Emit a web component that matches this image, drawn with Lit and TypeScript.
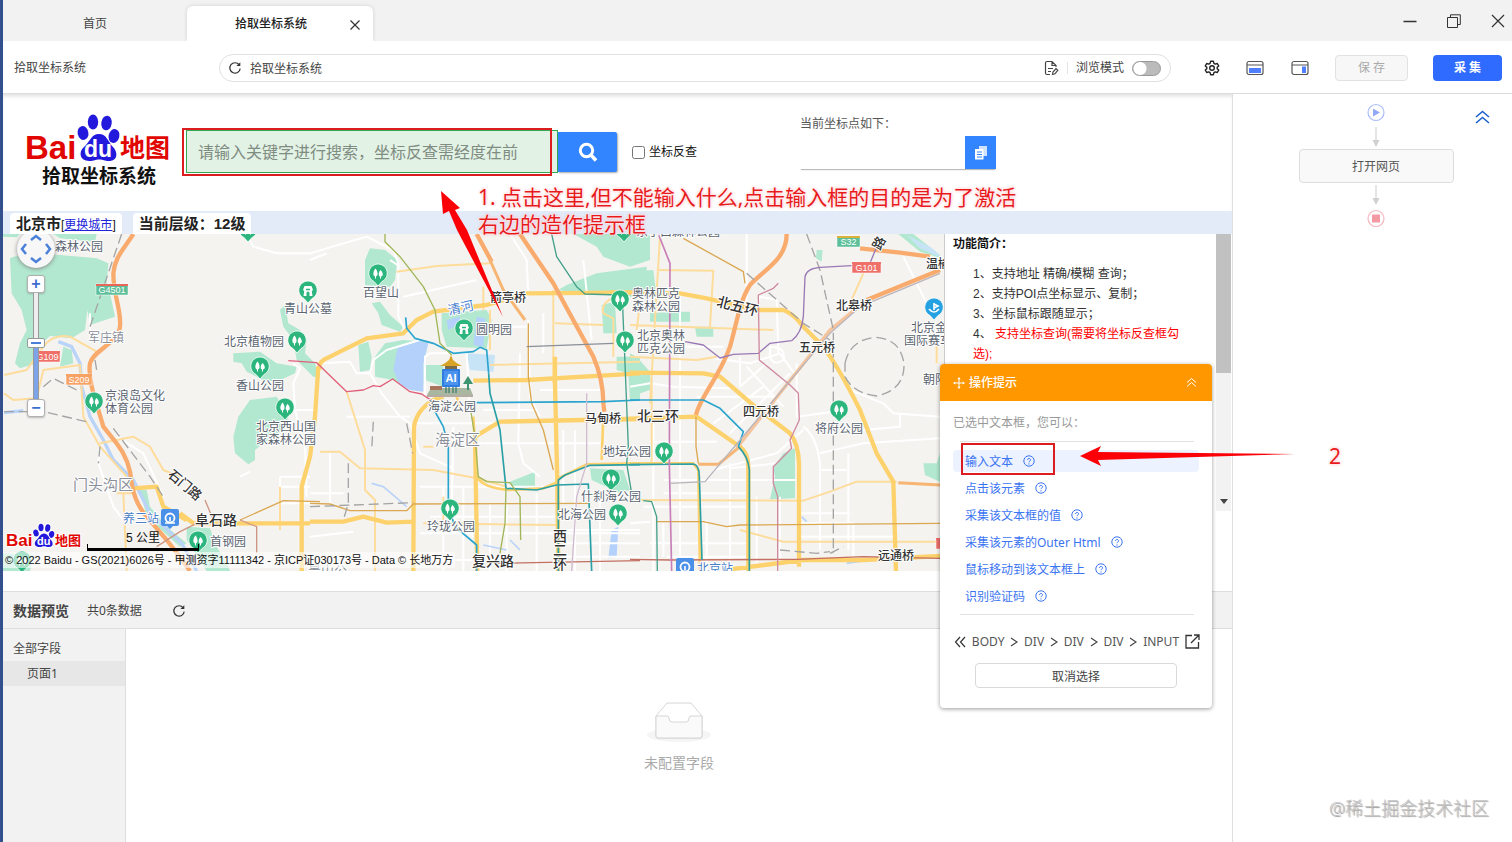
import { LitElement, html, svg, css } from "lit";
import { customElement } from "lit/decorators.js";

type Line = { c: string; w: number; dash?: string; a?: string; b?: string; m?: string };

// Map geometry is kept in thirds of a pixel, in three neighbouring tiles: a (west), b (centre), m (east).
const AREAS: Line[] = [
  {
    c: "#b1e8cf",
    w: 0,
    a: "M30 85 Q60 70 180 75 L290 85 L325 100 L320 160 L330 190 L345 260 L270 285 L262 240 L255 300 L215 325 L150 318 L120 345 L110 400 L60 415 L45 400 L60 340 L80 300 L65 240 L35 190Z M9 12 H60 L50 22 L9 20Z M160 12 H290 L285 35 L180 25Z M190 350 L215 360 L220 400 L180 410Z M840 240 L855 225 L865 280 L900 300 L920 330 L915 370 L945 400 L960 445 L940 440 L890 390 L880 330 L850 290Z M700 370 L780 365 L830 400 L890 410 L885 430 L830 455 L790 450 L740 425 L725 400 L700 395Z M750 510 L830 500 L865 560 L850 600 L790 640 L765 660 L765 690 L745 703 L705 670 L700 620 L715 560Z M9 970 L100 975 L90 1023 H9Z M560 890 L630 895 L650 950 L680 1000 L690 1023 H620 L560 930Z M350 700 L390 750 L400 790 L380 740Z M420 780 L440 780 L450 830 L500 890 L560 940 L540 950 L440 860Z",
    b: "M165 90 L180 55 L225 60 L262 90 L255 150 L240 170 L165 165Z M185 220 L210 215 L240 255 L280 290 L270 305 L215 285 L205 250Z M145 345 L175 335 L185 380 L180 420 L150 425Z M195 380 L225 340 L280 330 L355 335 L340 400 V460 L310 480 L250 450 L195 440Z M395 250 L530 240 L545 270 L530 355 L410 350 L395 300Z M345 405 H400 V470 L345 450Z M790 12 H1020 V90 L960 110 L880 80 L860 50Z M745 180 L770 165 L860 130 L1010 110 V200 L800 190Z M875 225 L915 215 L920 310 L880 310Z M920 380 H990 V510 H960 L955 430 L920 420Z M600 755 L675 725 V775 H610Z M840 715 L940 720 L960 780 L930 790 L845 750Z",
    m: "M0 125 L70 120 L80 200 H0Z M140 245 H180 V275 H60 V250Z M195 290 H250 V320 H200Z M0 370 L20 380 L60 425 V480 L0 500Z M560 60 L578 60 L575 95 L558 85Z M805 12 H850 L930 75 L925 82 L870 65Z M495 655 V805 L420 808 L435 740 L430 715 L460 670Z M930 670 L920 700 L880 700 L885 735 L930 755Z",
  },
  {
    c: "#b3d1fb",
    w: 0,
    b: "M262 355 L320 330 L355 340 L340 400 V485 L300 480 L270 465 L250 420Z M410 270 L450 260 L450 280 L415 300Z M500 260 L525 265 L520 350 L490 345Z M905 900 L925 890 L920 980 L895 985Z",
  },
  { c: "#c6e4f6", w: 0, b: "M470 370 L555 375 L550 425 L480 420Z", m: "M830 15 L900 50 L930 75 L920 78 L870 55Z" },
];

const ROADS: Line[] = [
  {
    c: "#ffffff",
    w: 6,
    a: "M12 545 L60 540 M740 12 L760 50 L830 70 H930 M270 250 V300 M880 400 L900 415 L880 460 L885 540 L915 650 L920 800 M885 540 H945 M840 740 H930 M840 740 V880 M840 770 H930 M840 820 H930 M300 650 L295 700 L340 830 L370 870 M350 620 L430 670 L490 800 M720 740 L750 725",
    b: "M0 70 L100 40 L170 20 L250 60 L265 100 V260 L290 310 M35 400 L120 395 L140 430 H180 L190 390 L230 360 L330 330 M180 430 L215 490 L270 560 L300 580 L330 670 L430 715 M320 580 H560 M360 370 L345 380 V500 M360 370 H470 L480 560 M430 590 L425 860 L490 920 M330 770 H740 M360 860 H740 M400 770 V1023 M460 770 V1023 M540 820 V1023 M590 820 V1023 M680 790 V1023 M330 910 H990 M60 670 V830 M0 920 L130 905 M630 370 L625 640 L640 700 L690 740 M655 270 L660 500 L690 560 M500 640 H870 M690 480 H870 M760 600 V820 M795 600 V1023 M520 540 H680 M600 12 L650 90 L655 200 M540 290 H650 M820 90 L845 330 M700 250 V370 M280 200 L500 150 M50 70 L0 90 M870 660 H990 M760 900 H990 M760 940 H990 M760 980 H990 M870 800 V1023 M270 110 L240 90 M700 860 H870 M0 790 H100 M110 560 H300 M240 990 H500",
    m: "M0 470 L60 460 L130 470 L300 475 M150 190 V1023 M100 350 H280 M350 12 V230 M380 240 L390 200 L440 210 L445 370 M250 385 L360 400 L450 370 L500 440 M330 470 L410 400 M350 410 L460 530 M250 580 L400 470 M300 610 L480 430 M60 635 H260 M70 570 V1023 M100 750 H500 M100 790 H360 M40 830 H360 M60 940 H350 M110 980 H350 M300 700 V1023 M230 870 V1023 M250 720 L440 670 L520 600 M300 715 L440 700 M500 560 L610 545 M520 590 Q560 620 570 700 V960 M655 670 V960 M570 720 H650 M660 480 L760 520 L790 550 L930 560 M570 670 L700 640 L930 625 M700 600 L810 590 V550 M820 80 L890 220 M0 880 L60 875 M380 800 V1000 M450 800 V1000 M500 880 H670 V980 M510 850 H660 M510 920 H800 M200 500 H440 M100 880 V980 M420 350 Q470 350 460 390 Q430 410 420 380Z M330 380 V470 M500 400 V560",
  },
  {
    c: "#b9d3f9",
    w: 10,
    a: "M175 335 L215 350 L240 400 L245 470 L270 560 L310 630 L340 690 L400 750 L450 850 L545 940 L590 1023 M12 548 L70 542",
  },
  { c: "#b9d3f9", w: 5, b: "M185 760 L220 770 L290 830 M520 945 L590 960 M600 930 L630 960", m: "M515 860 L530 875 M650 1000 L720 990" },
  {
    c: "#fddc9c",
    w: 6,
    a: "M12 435 L80 420 L130 350 Q160 310 210 320 L290 365 M12 490 L40 510 L110 505 L130 420 L240 405 L250 560 L300 650 L380 740 M300 640 L400 620 L450 650 L490 720 L540 740 M370 790 L380 1023 M350 790 H400 M840 770 V900",
    b: "M30 665 H90 L150 715 L370 720 L500 745 L590 770 M110 485 L165 660 V780 L195 810 V1023 M260 125 L380 108 L540 100 M540 405 L990 395 M735 280 L880 285 M730 180 V460 M520 170 V240 M915 200 Q870 220 880 250 L910 265 V380 M340 650 H370 M540 240 V360 M340 880 L740 885 M400 800 V870",
    m: "M80 120 L250 122 L240 290 M20 300 L30 220 M0 285 L430 300 M90 20 L60 520 M65 440 V700 M0 810 L520 812 L600 785 L680 755 L800 755 M330 900 L460 935 H930 M0 380 L200 390 L260 380 M700 130 L660 220 M920 340 V400",
  },
  {
    c: "#fdd16b",
    w: 13,
    a: "M955 410 L945 560 L930 680 L905 770 V1023 M540 850 L580 880 H930 M400 775 L470 770 L490 830 L560 870",
    b: "M28 420 Q25 395 50 385 L90 365 L170 325 L280 310 L320 270 L370 245 L530 225 L650 190 L1020 187 M310 1023 L312 590 Q320 540 370 510 L400 500 M0 875 H100 L160 860 L230 878 L310 875 M735 380 V460 L742 760 L745 1023 M502 1023 L495 620 L570 575 L820 570 L990 567 M490 452 L650 450 L990 430",
    m: "M-60 187 L150 190 L230 205 L380 240 H460 Q490 250 520 290 L575 345 Q620 400 690 540 L740 670 L790 755 L798 1023 M-60 568 L200 560 L330 650 Q355 670 355 710 V1023 M0 428 L220 430 L270 440 L375 530 L480 610 Q505 640 507 700 V1010 M300 1018 L520 990 H700 L930 978",
  },
  {
    c: "#fdd16b",
    w: 8,
    b: "M880 560 L875 690 M745 745 L830 703 L990 700 M490 560 L500 740 Q520 775 600 780 L700 775 L745 755 M440 500 L450 530",
    m: "M0 700 H190 L205 720 L210 1023",
  },
  {
    c: "#f9ab6e",
    w: 13,
    a: "M400 12 C370 60 345 80 340 130 C340 200 365 240 360 290 C355 340 280 360 270 400 C262 450 290 520 310 590 L350 640 Q390 690 395 760 Q405 820 440 860 L500 930 Q540 980 570 1023",
    b: "M630 12 L730 160 Q800 290 850 380 Q880 450 880 520 L883 545 M500 12 L545 95",
    m: "M470 12 C470 90 400 120 360 165 C330 210 320 280 300 350 C270 440 210 500 198 555 M690 55 L810 68 L900 80 M930 120 L710 210",
  },
  { c: "#f7b574", w: 9, b: "M540 90 L580 180 L645 270", m: "M805 758 L930 765 M205 703 H265 L330 650" },
  { c: "#f5c39c", w: 10, m: "M710 210 L600 300 L410 540 L320 655" },
  { c: "#dba852", w: 4, a: "M720 870 L850 812 L960 815", b: "M0 820 L60 822 L120 842 H290 L310 822 L835 820 M655 280 V440 L665 520 L700 600 L730 720", m: "M80 875 H220 L290 890 L330 885 L930 880 M160 25 L340 125 L345 160 M198 560 V650 L205 700" },
  { c: "#cf9683", w: 4, a: "M615 810 L640 870 M470 950 L540 905 L590 880 M720 870 L770 890 V970" },
  { c: "#c46f62", w: 4, b: "M560 1000 L990 992", m: "M0 988 L120 990 L500 988 L700 980 L930 985" },
];

const RAILS: Line[] = [
  {
    c: "#a4a4a4",
    w: 4,
    dash: "30 14",
    a: "M365 12 L270 290 M285 390 L290 420 M12 545 H130 L260 575 M130 470 L160 445 L230 480 M340 595 L450 740 L490 800 M300 650 L295 700",
    b: "M190 575 L185 660 M115 700 V820 L100 870 M290 580 L308 670 M0 830 L310 818",
    m: "M530 12 L570 120 L610 300 V970 M350 130 L520 280 L600 330 M600 970 L640 950 M450 960 L560 970 L600 965 M645 400 Q660 330 735 322 Q810 325 822 400 Q825 480 740 498 Q670 490 645 440Z",
  },
];

const METRO: Line[] = [
  { c: "#2ba5cf", w: 5, b: "M287 262 L290 295 L315 325 L370 340 L430 370 L490 365 L510 352 L530 360 L536 430 M500 518 L880 515 L990 510 M375 545 L400 590 L415 650 V830 L435 890 L500 945 V1023", m: "M0 510 H220 L270 535 L340 605 L325 650" },
  { c: "#2b9fa6", w: 5, b: "M536 430 L540 490 L570 600 L588 775 L680 780 L740 765 L835 762 L845 1023 M745 1023 V750 L765 735 L840 706 L990 704", m: "M0 704 L190 702 Q208 705 208 740 L216 990 M325 650 Q355 680 358 720 V1023" },
  { c: "#a0b658", w: 4, b: "M225 12 V35 L270 80 L340 170 L375 240 L390 340 L425 375 M480 530 L495 620 L505 740 L530 755 L600 758 L630 800 L632 930 M588 775 L585 880 L570 970" },
  { c: "#45a08a", w: 4, b: "M725 12 L740 80 L800 170 L825 192 L930 195 M938 230 L945 400 L955 650 L950 700 L965 790", m: "M40 812 L65 815 L80 860 L82 1023" },
  { c: "#e0607a", w: 4, b: "M-65 392 L20 398 L110 485 L160 480 L190 467 L210 470 L248 447 L300 485 L335 492 L365 512" },
  { c: "#8a8f98", w: 4, b: "M650 350 L910 340" },
  { c: "#d0bcd0", w: 4, b: "M830 490 V700 L800 800 L785 1023" },
  { c: "#c87fb8", w: 5, m: "M85 12 L120 100 L118 700 L125 1023" },
  { c: "#9a78b5", w: 4, m: "M665 107 L570 112 Q530 115 525 140 L520 260 Q515 310 485 332 L420 340 L385 370 L310 373 L270 384 L220 345 L165 335 M740 50 L720 100" },
  { c: "#d08aa0", w: 4, m: "M445 160 L430 175 L385 195 L388 390 L480 465 L505 490 L508 570 L480 630 L485 655 L430 710 V760 L443 800 V1023" },
  { c: "#b9b4bc", w: 4, m: "M930 130 L690 230 L600 310 L225 755 L120 760" },
];

const TREE_PINS = [
  [378, 274], [297, 341], [260, 367], [285, 408], [94, 402], [198, 541], [620, 300], [625, 341],
  [839, 410], [664, 452], [611, 479], [618, 514], [450, 509], [22, 561], [248, 230], [624, 230],
];
const GATE_PINS = [[308, 291], [464, 329]];
const STATIONS = [[170, 518], [685, 567]];

// x, y of the baseline start, text, size, kind, rotation
const LABELS: [number, number, string, number, string, number?][] = [
  [55, 251, "森林公园", 12, "poi"],
  [88, 342, "军庄镇", 12, "area"],
  [224, 346, "北京植物园", 12, "poi"],
  [284, 313, "青山公墓", 12, "poi"],
  [363, 297, "百望山", 12, "poi"],
  [236, 390, "香山公园", 12, "poi"],
  [256, 431, "北京西山国", 12, "poi"],
  [256, 444, "家森林公园", 12, "poi"],
  [105, 400, "京浪岛文化", 12, "poi"],
  [105, 413, "体育公园", 12, "poi"],
  [73, 490, "门头沟区", 15, "area"],
  [167, 476, "石门路", 13, "road", 40],
  [123, 523, "养三站", 12, "metro"],
  [195, 525, "阜石路", 14, "road"],
  [210, 546, "首钢园", 12, "poi"],
  [449, 315, "清河", 13, "water", -12],
  [490, 302, "箭亭桥", 12, "road"],
  [476, 334, "圆明园", 12, "poi"],
  [428, 411, "海淀公园", 12, "poi"],
  [435, 445, "海淀区", 15, "area"],
  [427, 531, "玲珑公园", 12, "poi"],
  [472, 566, "复兴路", 14, "road"],
  [585, 423, "马甸桥", 12, "road"],
  [603, 456, "地坛公园", 12, "poi"],
  [581, 501, "什刹海公园", 12, "poi"],
  [558, 519, "北海公园", 12, "poi"],
  [553, 541, "西", 14, "road"],
  [553, 555, "二", 14, "road"],
  [553, 569, "环", 14, "road"],
  [636, 236, "东小口森林公园", 12, "poi"],
  [632, 298, "奥林匹克", 12, "poi"],
  [632, 311, "森林公园", 12, "poi"],
  [637, 340, "北京奥林", 12, "poi"],
  [637, 353, "匹克公园", 12, "poi"],
  [716, 306, "北五环", 14, "road", 14],
  [836, 310, "北皋桥", 12, "road"],
  [799, 352, "五元桥", 12, "road"],
  [743, 416, "四元桥", 12, "road"],
  [637, 421, "北三环", 14, "road"],
  [815, 433, "将府公园", 12, "poi"],
  [878, 560, "远通桥", 12, "road"],
  [697, 573, "北京站", 12, "metro"],
  [880, 251, "路", 13, "road", -62],
  [926, 268, "温榆桥", 12, "road"],
  [911, 332, "北京金港", 12, "poi"],
  [904, 345, "国际赛车场", 12, "poi"],
  [923, 384, "朝阳区", 12, "poi"],
  [308, 575, "景山公", 13, "area"],
];

// x, y, width, text, fill, cap colour
const SHIELDS: [number, number, number, string, string, string][] = [
  [96, 284, 32, "G4501", "#5cbf99", "#e8675b"],
  [35, 351, 25, "G109", "#ef7068", "#ef7068"],
  [66, 374, 26, "S209", "#f7a265", "#f7a265"],
  [837, 236, 23, "S32", "#5cbf99", "#d9b13c"],
  [852, 262, 29, "G101", "#ef7068", "#ef7068"],
  [936, 538, 20, "", "#ef7068", "#ef7068"],
];

const paw = svg`
  <ellipse cx="12" cy="28" rx="5.4" ry="7" fill="#2319dc" transform="rotate(-12 12 28)"></ellipse>
  <ellipse cx="22" cy="17" rx="5.2" ry="7.4" fill="#2319dc"></ellipse>
  <ellipse cx="35.500" cy="18" rx="5.2" ry="7.400" fill="#2319dc" transform="rotate(8 35.5 18)"></ellipse>
  <ellipse cx="43" cy="31" rx="5.4" ry="7" fill="#2319dc" transform="rotate(14 43 31)"></ellipse>
  <path d="M28 29C20 29 19 37 13 42C7 47 9 56 18 56C24 56 24 54.500 28 54.500C33 54.500 33 56 38 56C47 56 47 47 42 42C37 37 36 29 28 29Z" fill="#2319dc"></path>`;

const helpIcon = html`<svg class="help" viewBox="0 0 12 12" width="12" height="12" aria-hidden="true">
  <circle cx="6" cy="6" r="5.2" fill="none" stroke="currentColor"></circle>
  <path d="M4.400 5C4.400 3 7.600 3 7.600 4.900C7.600 6 6 6 6 7.200" fill="none" stroke="currentColor"></path>
  <circle cx="6" cy="8.900" r=".6" fill="currentColor"></circle>
</svg>`;

const reloadIcon = html`<svg viewBox="0 0 14 14" width="14" height="14" aria-hidden="true">
  <path d="M11.200 3.800A5.200 5.200 0 1 0 12.200 7.600" fill="none" stroke="#333" stroke-width="1.200"></path>
  <path d="M12.300 1.200V5H8.400Z" fill="#333"></path>
</svg>`;

@customElement("city-map")
export class CityMap extends LitElement {
  static styles = css`
    :host {
      display: block;
      position: relative;
      overflow: hidden;
      height: 337px;
      background: #f4f3f0;
      font-family: "Liberation Sans", "Noto Sans CJK SC", sans-serif;
    }
    .canvas {
      display: block;
      width: 100%;
      height: 100%;
    }
    .label {
      paint-order: stroke;
      stroke: #fff;
      stroke-width: 2px;
      stroke-linejoin: round;
      fill: #555;
    }
    .road { fill: #333; font-weight: 500; }
    .poi { fill: #5b6470; }
    .area { fill: #8a8f9a; }
    .metro { fill: #4a7fc8; }
    .water { fill: #4a80d0; }
    .shield { fill: #fff; font-size: 9px; text-anchor: middle; }
    .logo-text { font-weight: 700; fill: #e10601; stroke: #fff; stroke-width: 2px; paint-order: stroke; }
    .du { fill: #fff; font-weight: 700; }
    .pan {
      position: absolute;
      top: -5px;
      left: 13px;
      width: 40px;
      height: 40px;
      filter: drop-shadow(0 1px 2px #888);
    }
    .zoom {
      position: absolute;
      top: 41px;
      left: 23px;
      display: flex;
      flex-direction: column;
      align-items: center;
      width: 20px;
    }
    .zoom button {
      width: 18px;
      height: 18px;
      padding: 0;
      border: 1px solid #b0b0b0;
      border-radius: 3px;
      background: #fff;
      color: #3a6fd0;
      font: 700 16px/14px "Liberation Sans", sans-serif;
      box-shadow: 0 1px 2px #8888;
    }
    .zoom input {
      appearance: none;
      writing-mode: vertical-lr;
      direction: rtl;
      width: 18px;
      height: 106px;
      margin: 0;
      background: linear-gradient(#eee 50%, #7da4e8 50%) center / 4px 100% no-repeat,
        linear-gradient(#999, #999) center / 6px 100% no-repeat;
    }
    .zoom input::-webkit-slider-thumb {
      appearance: none;
      box-sizing: border-box;
      width: 18px;
      height: 10px;
      border: 1px solid #999;
      border-radius: 2px;
      background: linear-gradient(#4a80d8, #4a80d8) center / 10px 2px no-repeat, #fff;
    }
    .scale {
      position: absolute;
      left: 84px;
      bottom: 20px;
      width: 112px;
      height: 24px;
      box-sizing: border-box;
      border-bottom: 3px solid #000;
      background: linear-gradient(#000, #000) left bottom / 1px 4px no-repeat,
        linear-gradient(#000, #000) right bottom / 1px 4px no-repeat;
      color: #111;
      font-size: 12px;
      line-height: 22px;
      text-align: center;
    }
    .copyright {
      position: absolute;
      left: 0;
      bottom: 3px;
      padding: 0 2px;
      color: #111;
      background: #fff9;
      font-size: 11px;
      line-height: 16px;
      white-space: nowrap;
    }
  `;

  private layer(lines: Line[]) {
    const tile = (l: Line, d: string | undefined, dx: number) =>
      d
        ? svg`<path d=${d} transform="translate(${dx} 0)" fill=${l.w ? "none" : l.c} stroke=${l.w ? l.c : "none"}
            stroke-width=${l.w} stroke-linejoin="round" stroke-dasharray=${l.dash ?? "none"}></path>`
        : svg``;
    return lines.map((l) => svg`${tile(l, l.a, 0)}${tile(l, l.b, 930)}${tile(l, l.m, 1890)}`);
  }

  private pin(x: number, y: number, glyph: unknown, fill = "#2cb57c") {
    return svg`<g transform="translate(${x} ${y})">
      <path d="M0 12L-4 7.500A9.200 9.200 0 1 1 4 7.500Z" fill=${fill} stroke="#fff" stroke-width=".8"></path>${glyph}
    </g>`;
  }

  render() {
    const trees = svg`<path d="M-2.500 -5.500C-5.500 -2 -5 2 -3 2.400V4.500H-2V2.400C0 2 .400 -2 -2.500 -5.500ZM2.500 -4C0 -1 .500 2 2 2.400V4.500H3V2.400C5.500 2 5.500 -1 2.500 -4Z" fill="#fff"></path>`;
    const gate = svg`<path d="M-5 -1L-3.500 -5H3.500L5 -1L3.800 0L4.500 5H1.500V2A1.500 1.500 0 0 0 -1.500 2V5H-4.500L-3.800 0Z" fill="#fff"></path><path d="M-2 -1.500H2" stroke="#2cb57c" stroke-width="1.500"></path>`;
    const anchor = svg`<path d="M0 -5V2M-5 1Q0 7 5 1M0 -4L4 -2L0 0" stroke="#fff" stroke-width="1.600" fill="none"></path>`;
    return html`
      <svg class="canvas" viewBox="3 234 941 337" preserveAspectRatio="xMinYMin slice" role="img" aria-label="北京市地图">
        <g transform="translate(0 230) scale(.33333)">
          ${this.layer(AREAS)}${this.layer(ROADS)}${this.layer(RAILS)}${this.layer(METRO)}
        </g>
        ${SHIELDS.map(
          ([x, y, w, t, f, cap]) => svg`<rect x=${x} y=${y} width=${w} height="11" fill=${f} stroke="#fff" stroke-width=".5"></rect>
            <rect x=${x} y=${y} width=${w} height="2" fill=${cap}></rect>
            <text class="shield" x=${x + w / 2} y=${y + 9}>${t}</text>`,
        )}
        <g transform="translate(451 378)">
          <path d="M-24 17L-20 10H19L22 17Z" fill="#a9b7a0"></path>
          <path d="M-24 17H22V19H-24Z" fill="#b5ada5"></path>
          <path d="M-21 8H-9V12H-21Z" fill="#a8745c"></path>
          <path d="M17 -2L22 6H18V12H16V6H12Z" fill="#3f9470"></path>
          <path d="M-6 -12H6V-8H-6Z" fill="#7a6a48"></path>
          <path d="M-5 9V15M-2 9V15M2 9V15M5 9V15" stroke="#39786a" stroke-width="1.200"></path>
          <path d="M0 -23L2 -18Q5 -15 11 -12H-11Q-5 -15 -2 -18Z" fill="#d8a428"></path>
          <rect x="-9" y="-9" width="18" height="18" rx="1" fill="#2f7de0"></rect>
          <rect x="-7" y="-7" width="14" height="14" fill="#4b93ee"></rect>
          <text x="0" y="4" fill="#fff" font-size="11" font-weight="700" text-anchor="middle">AI</text>
        </g>
        ${TREE_PINS.map(([x, y]) => this.pin(x, y, trees))}
        ${GATE_PINS.map(([x, y]) => this.pin(x, y, gate))}
        ${this.pin(934, 308, anchor, "#25a0e0")}
        ${STATIONS.map(
          ([x, y]) => svg`<g transform="translate(${x} ${y})">
            <path d="M-7 -9H7Q9 -9 9 -7V6Q9 8 7 8H3L0 11L-3 8H-7Q-9 8 -9 6V-7Q-9 -9 -7 -9Z" fill="#4a90e8"></path>
            <circle r="4.500" fill="none" stroke="#fff" stroke-width="1.800"></circle>
            <path d="M-5 5H5M0 -1V3" stroke="#fff" stroke-width="1.600"></path>
          </g>`,
        )}
        ${LABELS.map(
          ([x, y, t, s, k, r]) =>
            svg`<text class="label ${k}" font-size=${s} transform="translate(${x} ${y}) rotate(${r ?? 0})">${t}</text>`,
        )}
        <g transform="translate(5 520)">
          <text class="logo-text" x="1" y="26" font-size="17">Bai</text>
          <text class="logo-text" x="50" y="25" font-size="13">地图</text>
          <g transform="translate(25 -1) scale(.5)" stroke="#fff" stroke-width="4" paint-order="stroke">${paw}</g>
          <text class="du" x="32" y="25" font-size="11">du</text>
        </g>
      </svg>
      <svg class="pan" viewBox="0 0 40 40" aria-hidden="true">
        <circle cx="20" cy="20" r="19" fill="#f7f7f7"></circle>
        <path d="M15 11L20 7L25 11M15 29L20 33L25 29M10 15L6 20L10 25M30 15L34 20L30 25" fill="none" stroke="#4a80d8" stroke-width="2.500"></path>
      </svg>
      <div class="zoom">
        <button aria-label="放大">+</button>
        <input type="range" aria-label="缩放级别" min="0" max="100" value="53" />
        <button aria-label="缩小">−</button>
      </div>
      <div class="scale">5 公里</div>
      <div class="copyright">© 2022 Baidu - GS(2021)6026号 - 甲测资字11111342 - 京ICP证030173号 - Data © 长地万方</div>
    `;
  }
}

@customElement("app-root")
export class AppRoot extends LitElement {
  static styles = css`
    :host {
      display: flex;
      flex-direction: column;
      box-sizing: border-box;
      min-height: 100vh;
      border-left: 3px solid #34508c;
      position: relative;
      overflow: hidden;
      background: #fff;
      color: #444;
      font-family: "Noto Sans", "Noto Sans CJK SC", sans-serif;
      font-size: 12px;
      line-height: 20px;
    }
    * { box-sizing: border-box; }
    button, input { font-family: inherit; font-size: 12px; }
    button { padding: 0; border: 0; background: none; color: inherit; cursor: pointer; }
    svg { display: block; flex: none; }

    .tabs {
      display: flex;
      align-items: flex-end;
      height: 41px;
      background: #f2f2f2;
    }
    .tab {
      display: flex;
      align-items: center;
      justify-content: center;
      width: 184px;
      height: 35px;
      line-height: 18px;
      position: relative;
    }
    .tab.active {
      width: 186px;
      background: #fff;
      border-radius: 6px 6px 0 0;
      box-shadow: 0 0 4px #0002;
      font-weight: 500;
      color: #222;
      padding-right: 18px;
    }
    .close { position: absolute; right: 12px; top: 13px; }
    .window { display: flex; gap: 30px; margin-left: auto; height: 41px; align-items: center; padding-right: 7px; }

    .toolbar {
      display: flex;
      align-items: center;
      gap: 25px;
      height: 53px;
      padding: 2px 10px 0 11px;
      border-bottom: 1px solid #dcdcdc;
      position: relative;
      background: #fff;
    }
    .crumb { width: 180px; line-height: 18px; }
    .address {
      flex: 1;
      display: flex;
      align-items: center;
      gap: 8px;
      height: 28px;
      margin-right: 8px;
      padding: 0 9px 0 8px;
      border: 1px solid #e0e0e0;
      border-radius: 14px;
    }
    .address input { flex: 1; min-width: 0; border: 0; padding: 0; background: none; color: #444; outline: 0; }
    .address .rule { width: 1px; height: 12px; background: #e4e4e4; }
    .mode { display: flex; align-items: center; gap: 8px; }
    .mode input {
      appearance: none;
      flex: none;
      width: 29px;
      height: 15px;
      margin: 0;
      border: 1px solid #999;
      border-radius: 8px;
      background: radial-gradient(circle at 7px 50%, #fff 6px, #bbb 7px);
    }
    .save, .collect { height: 26px; border-radius: 4px; line-height: 24px; white-space: pre; }
    .save { width: 73px; background: #f7f7f7; border: 1px solid #e2e2e2; color: #aaa; }
    .collect { width: 69px; background: #2f6bff; color: #fff; font-weight: 700; }

    .work { flex: 1; display: flex; min-height: 0; }
    .left { flex: 1; min-width: 0; display: flex; flex-direction: column; position: relative; }
    .flow {
      width: 280px;
      border-left: 1px solid #dedede;
      position: relative;
      display: flex;
      flex-direction: column;
      align-items: center;
      padding: 9px 0 0 7px;
    }
    .step {
      width: 155px;
      height: 34px;
      border: 1px solid #ddd;
      border-radius: 4px;
      background: #f9f9f9;
      color: #555;
    }
    .fold { position: absolute; right: 22px; top: 16px; }
    .watermark {
      position: absolute;
      right: 23px;
      bottom: 20px;
      font-size: 18px;
      line-height: 28px;
      font-weight: 300;
      color: #c4c4c4;
      text-shadow: 1px 1px 1px #999;
      white-space: nowrap;
    }

    .search {
      display: flex;
      height: 117px;
      padding-left: 23px;
      box-shadow: inset 0 4px 4px -2px #0002;
    }
    .logo { width: 144px; height: 80px; margin-top: 16px; }
    .logo .word { fill: #e10601; font-weight: 700; font-family: "Liberation Sans", "Noto Sans CJK SC", sans-serif; }
    .logo .sub { fill: #111; font-weight: 700; }
    .logo .du { fill: #fff; font-weight: 700; font-family: "Liberation Sans", sans-serif; }
    .query { position: relative; display: flex; align-items: center; height: 43px; margin: 36px 15px 0 16px; }
    .query input {
      width: 372px;
      height: 43px;
      padding: 0 11px;
      border: 1px solid #35a854;
      background: #e2f2e5;
      font-size: 16px;
      outline: 0;
    }
    .query input::placeholder { color: #7f8c82; opacity: 1; }
    .query button {
      display: grid;
      place-items: center;
      width: 59px;
      height: 40px;
      background: #3385ff;
      border-radius: 0 2px 2px 0;
      box-shadow: 1px 1px 2px #0005;
    }
    .box { position: absolute; border: 2px solid #dc1d20; pointer-events: none; }
    .box.q { left: -4px; top: -2px; width: 370px; height: 48px; }
    .reverse { display: flex; align-items: center; gap: 4px; height: 20px; margin-top: 48px; color: #111; }
    .reverse input { width: 13px; height: 13px; margin: 0; }
    .point { margin-left: 103px; padding-top: 20px; }
    .point label { display: block; height: 22px; color: #555; }
    .point div { display: flex; width: 196px; height: 33px; box-shadow: 0 2px 1px -1px #0004; }
    .point input { width: 165px; border: 0; background: #fff; outline: 0; }
    .point button { width: 31px; background: #3385ff; display: grid; place-items: center; }

    .city {
      display: flex;
      gap: 11px;
      align-items: flex-end;
      height: 23px;
      padding-left: 7px;
      background: #e3eaf8;
      font: 700 15px/22px "Liberation Sans", "Noto Sans CJK SC", sans-serif;
      color: #222;
    }
    .city span { padding: 0 6px; height: 21px; background: #fff; border-radius: 4px 4px 0 0; white-space: nowrap; }
    .city small { font-size: 12px; font-weight: 400; }
    .city a { color: #2323d8; }

    .page { display: flex; height: 357px; padding-bottom: 20px; }
    city-map { flex: 1; min-width: 0; }
    .intro { width: 288px; padding-left: 8px; border-left: 1px solid #ccc; display: flex; color: #333; font-family: "Liberation Sans", "Noto Sans CJK SC", sans-serif; }
    .intro section { flex: 1; }
    .intro h2 { margin: 0; font-size: 12px; line-height: 20px; color: #111; }
    .intro ol { list-style: none; margin: 10px 0 0; padding: 0 0 0 20px; }
    .intro em { color: #f00; font-style: normal; }
    .bar { width: 15px; height: 277px; margin-right: 1px; background: #f2f2f2; display: flex; flex-direction: column; justify-content: space-between; align-items: center; padding-bottom: 7px; }
    .bar i { width: 15px; height: 139px; background: #c1c1c1; }
    .bar b { border: 4px solid transparent; border-top: 5px solid #444; border-bottom: 0; }

    .data-head {
      display: flex;
      align-items: center;
      height: 38px;
      padding: 2px 0 0 10px;
      background: #f2f2f2;
      border: 1px solid #dedede;
      border-width: 1px 0;
    }
    .data-head h2 { margin: 0 18px 0 0; font-size: 14px; line-height: 20px; }
    .data-head button { margin-left: 30px; }
    .data { flex: 1; display: flex; min-height: 213px; }
    .fields { width: 123px; background: #f2f2f2; border-right: 1px solid #dedede; line-height: 25px; padding-top: 7px; }
    .fields div { padding-left: 10px; }
    .fields .on { padding-left: 24px; background: #e7e7e7; }
    .empty { flex: 1; display: flex; flex-direction: column; align-items: center; padding-top: 72px; font-size: 14px; color: #aaa; }
    .empty svg { margin-bottom: 10px; }

    .tips {
      position: absolute;
      right: 20px;
      top: 270px;
      width: 272px;
      height: 344px;
      background: #fff;
      border-radius: 4px;
      box-shadow: 0 1px 4px #0006;
    }
    .tips header {
      display: flex;
      align-items: center;
      gap: 4px;
      height: 37px;
      padding: 0 15px 0 13px;
      background: #ff9800;
      border-radius: 4px 4px 0 0;
      color: #fff;
      font-weight: 500;
    }
    .tips header button { margin-left: auto; }
    .tips p { margin: 12px 13px 8px; color: #999; }
    .tips hr { margin: 0 18px 0 20px; border: 0; border-top: 1px solid #e2e2e2; }
    .tips ul { list-style: none; margin: 8px 13px 7px; padding: 0; display: grid; gap: 5px; }
    .tips li { position: relative; height: 22px; padding-left: 12px; border-radius: 4px; display: flex; }
    .tips li.on { background: #ecf2ff; }
    .tips li button { display: flex; align-items: center; gap: 10px; color: #3b74f2; }
    .box.t { left: 8px; top: -7px; width: 94px; height: 32px; }
    .path { display: flex; align-items: center; justify-content: space-between; margin: 18px 12px 13px 14px; white-space: nowrap; }
    .path button { color: #555; }
    .cancel { display: block; width: 202px; height: 25px; margin: 0 auto; border: 1px solid #d9d9d9; border-radius: 4px; }

    .note { position: absolute; color: #e8191c; font-size: 21px; line-height: 27px; margin: 0; white-space: nowrap; text-shadow: 0 0 2px #fff, 0 0 2px #fff, 0 0 3px #f88; pointer-events: none; }
    .note.one { left: 475px; top: 184px; }
    .note.two { left: 1326px; top: 443px; }
    .arrow { position: absolute; pointer-events: none; }
    .arrow.one { left: 437px; top: 190px; }
    .arrow.two { left: 1077px; top: 445px; }
  `;

  private option(text: string, on = false) {
    return html`<li class=${on ? "on" : ""}>
      <button>${text} ${helpIcon}</button>${on ? html`<span class="box t"></span>` : ""}
    </li>`;
  }

  render() {
    const down = svg`<path d="M4 0V17" stroke="#dcdcdc" stroke-width="1.500"></path><path d="M.500 13H7.500L4 20Z" fill="#d0d0d0"></path>`;
    const next = html`<svg width="8" height="10" viewBox="0 0 8 10" fill="none" stroke="#444" stroke-width="1.200" aria-hidden="true"><path d="M1 1L7 5L1 9"></path></svg>`;
    return html`
      <nav class="tabs">
        <button class="tab">首页</button>
        <div class="tab active">
          拾取坐标系统
          <button class="close" aria-label="关闭标签">
            <svg width="12" height="12" viewBox="0 0 12 12"><path d="M1.500 1.500L10.500 10.500M10.500 1.500L1.500 10.500" stroke="#333" stroke-width="1.200"></path></svg>
          </button>
        </div>
        <div class="window">
          <button aria-label="最小化"><svg width="14" height="14" viewBox="0 0 14 14"><path d="M.500 7.500H13.500" stroke="#333" stroke-width="1.500"></path></svg></button>
          <button aria-label="还原"><svg width="14" height="14" viewBox="0 0 14 14"><path d="M.500 3.500H10.500V13.500H.500ZM3.500 3.500V.800H13.300V10.500H10.500" fill="none" stroke="#333"></path></svg></button>
          <button aria-label="关闭"><svg width="14" height="14" viewBox="0 0 14 14"><path d="M1 1L13 13M13 1L1 13" stroke="#333" stroke-width="1.200"></path></svg></button>
        </div>
      </nav>

      <div class="toolbar">
        <span class="crumb">拾取坐标系统</span>
        <div class="address">
          <button aria-label="刷新">${reloadIcon}</button>
          <input aria-label="地址" value="拾取坐标系统" />
          <button aria-label="编辑">
            <svg width="15" height="16" viewBox="0 0 15 16" fill="none" stroke="#444" stroke-width="1.200"><path d="M6 14.500H3Q1.500 14.500 1.500 13V3Q1.500 1.500 3 1.500H8L12 5.500V7M8 1.500V5.500H12M4 8.500H9M4 11.500H7M8.500 14.500L9 12L12 8.500L13.800 10.200L11 13.800Z"></path></svg>
          </button>
          <span class="rule"></span>
          <label class="mode">浏览模式 <input type="checkbox" role="switch" /></label>
        </div>
        <button aria-label="设置">
          <svg width="16" height="16" viewBox="0 0 16 16" fill="none" stroke="#222" stroke-width="1.400" stroke-linejoin="round"><path d="M6.600 1.300H9.400L9.900 3.300L11.300 4.100L13.300 3.500L14.700 5.900L13.200 7.300V8.700L14.700 10.100L13.300 12.500L11.300 11.900L9.900 12.700L9.400 14.700H6.600L6.100 12.700L4.700 11.900L2.700 12.500L1.300 10.100L2.800 8.700V7.300L1.300 5.900L2.700 3.500L4.700 4.100L6.100 3.300Z"></path><circle cx="8" cy="8" r="2.300"></circle></svg>
        </button>
        <button aria-label="底部面板">
          <svg width="20" height="16" viewBox="0 0 20 16"><rect x="2" y="1.500" width="16" height="13" rx="2" fill="none" stroke="#555" stroke-width="1.200"></rect><path d="M2 5H18" stroke="#555"></path><path d="M4 8H16V13H4Z" fill="#4f7fff"></path></svg>
        </button>
        <button aria-label="侧边面板">
          <svg width="20" height="16" viewBox="0 0 20 16"><rect x="2" y="1.500" width="16" height="13" rx="2" fill="none" stroke="#555" stroke-width="1.200"></rect><path d="M2 5H18" stroke="#555"></path><path d="M12 6.500H16V13H12Z" fill="#4f7fff"></path></svg>
        </button>
        <button class="save" disabled>保 存</button>
        <button class="collect">采 集</button>
      </div>

      <div class="work">
        <main class="left">
          <div class="search">
            <svg class="logo" viewBox="0 0 144 80" role="img" aria-label="百度地图 拾取坐标系统">
              <text class="word" x="-1" y="49" font-size="33">Bai</text>
              <text class="word" x="94" y="47" font-size="25">地图</text>
              <g transform="translate(45 -5)">${paw}</g>
              <text class="du" x="58" y="47" font-size="23">du</text>
              <text class="sub" x="16" y="73" font-size="19">拾取坐标系统</text>
            </svg>
            <div class="query">
              <input aria-label="关键字" placeholder="请输入关键字进行搜索，坐标反查需经度在前" />
              <button aria-label="搜索">
                <svg width="20" height="20" viewBox="0 0 20 20" fill="none" stroke="#fff"><circle cx="8.500" cy="8.500" r="6.200" stroke-width="3"></circle><path d="M13 13L18 18.500" stroke-width="3.500"></path></svg>
              </button>
              <span class="box q"></span>
            </div>
            <label class="reverse"><input type="checkbox" />坐标反查</label>
            <div class="point">
              <label for="coord">当前坐标点如下：</label>
              <div>
                <input id="coord" />
                <button aria-label="复制">
                  <svg width="14" height="14" viewBox="0 0 14 14"><path d="M5 0H13V10H5Z" fill="#cfe2ff"></path><path d="M1 3H9.500V13.500H1Z" fill="#fff"></path><path d="M3 6H8M3 8.500H8M3 11H8" stroke="#3385ff"></path></svg>
                </button>
              </div>
            </div>
          </div>
          <div class="city">
            <span>北京市<small>[<a href="#">更换城市</a>]</small></span>
            <span>当前层级：12级</span>
          </div>
          <div class="page">
            <city-map></city-map>
            <div class="intro">
              <section>
                <h2>功能简介：</h2>
                <ol>
                  <li>1、支持地址 精确/模糊 查询；</li>
                  <li>2、支持POI点坐标显示、复制；</li>
                  <li>3、坐标鼠标跟随显示；</li>
                  <li>4、 <em>支持坐标查询(需要将坐标反查框勾<br />选);</em></li>
                </ol>
              </section>
              <div class="bar"><i></i><b></b></div>
            </div>
          </div>
          <div class="data-head">
            <h2>数据预览</h2>
            <span>共0条数据</span>
            <button aria-label="刷新数据">${reloadIcon}</button>
          </div>
          <div class="data">
            <div class="fields">
              <div>全部字段</div>
              <div class="on">页面1</div>
            </div>
            <div class="empty">
              <svg width="64" height="42" viewBox="0 0 64 42"><ellipse cx="32" cy="34" rx="32" ry="7" fill="#f5f5f5"></ellipse><path d="M9 15L20 2H44L55 15V35Q55 37 53 37H11Q9 37 9 35Z" fill="#fff" stroke="#d6d6d6"></path><path d="M9 15H20Q22 15 22 17Q22 21 25 21H39Q42 21 42 17Q42 15 44 15H55V35Q55 37 53 37H11Q9 37 9 35Z" fill="#fafafa" stroke="#d6d6d6"></path></svg>
              未配置字段
            </div>
          </div>

          <aside class="tips">
            <header>
              <svg width="12" height="12" viewBox="0 0 12 12" fill="#fff"><path d="M6 1.500V10.500M1.500 6H10.500" stroke="#fff"></path><path d="M6 0L7.600 2.200H4.400ZM6 12L7.600 9.800H4.400ZM0 6L2.200 4.400V7.600ZM12 6L9.800 4.400V7.600Z"></path></svg>
              操作提示
              <button aria-label="收起提示"><svg width="11" height="11" viewBox="0 0 11 11" fill="none" stroke="#fff"><path d="M1 5.500L5.500 1.500L10 5.500M1 9.500L5.500 5.500L10 9.500"></path></svg></button>
            </header>
            <p>已选中文本框，您可以：</p>
            <hr />
            <ul>
              ${this.option("输入文本", true)}${this.option("点击该元素")}${this.option("采集该文本框的值")}
              ${this.option("采集该元素的Outer Html")}${this.option("鼠标移动到该文本框上")}${this.option("识别验证码")}
            </ul>
            <hr />
            <div class="path">
              <svg width="12" height="12" viewBox="0 0 12 12" fill="none" stroke="#333" stroke-width="1.200"><path d="M6 1L1.500 6L6 11M11 1L6.500 6L11 11"></path></svg>
              <button>BODY</button>${next}<button>DIV</button>${next}<button>DIV</button>${next}<button>DIV</button>${next}<button>INPUT</button>
              <svg width="15" height="15" viewBox="0 0 15 15" fill="none" stroke="#333" stroke-width="1.300"><path d="M7 1.500H1V14H13.500V8M9 1H14V6M14 1L6 9"></path></svg>
            </div>
            <button class="cancel">取消选择</button>
          </aside>
        </main>

        <aside class="flow">
          <svg width="18" height="46" viewBox="0 0 18 46"><circle cx="9" cy="9.500" r="8" fill="none" stroke="#a9bcfa" stroke-width="1.200"></circle><path d="M6 5.500L13 9.500L6 13.500Z" fill="#93a9f8"></path><g transform="translate(5 24)">${down}</g></svg>
          <button class="step">打开网页</button>
          <svg width="18" height="46" viewBox="0 0 18 46"><g transform="translate(5 2)">${down}</g><circle cx="9" cy="35.500" r="8" fill="none" stroke="#f5b5bb" stroke-width="1.200"></circle><path d="M5 31.500H13V39.500H5Z" fill="#f39aa3"></path></svg>
          <button class="fold" aria-label="折叠"><svg width="15" height="14" viewBox="0 0 15 14" fill="none" stroke="#1c62d0" stroke-width="1.600"><path d="M1 7L7.500 1.500L14 7M1 13L7.500 7.500L14 13"></path></svg></button>
          <div class="watermark">@稀土掘金技术社区</div>
        </aside>
      </div>

      <svg class="arrow one" width="70" height="130" viewBox="440 190 70 130"><path d="M441 191L460 208L455 210L467 230L503 317L457 230L449 211L443 214Z" fill="#fb0007"></path></svg>
      <svg class="arrow two" width="220" height="22" viewBox="1080 445 220 22"><path d="M1080 456L1101 446L1098 452L1295 454L1098 460L1101 466Z" fill="#fb0007"></path></svg>
      <p class="note one">1. 点击这里,但不能输入什么,点击输入框的目的是为了激活<br />右边的造作提示框</p>
      <p class="note two">2</p>
    `;
  }
}
